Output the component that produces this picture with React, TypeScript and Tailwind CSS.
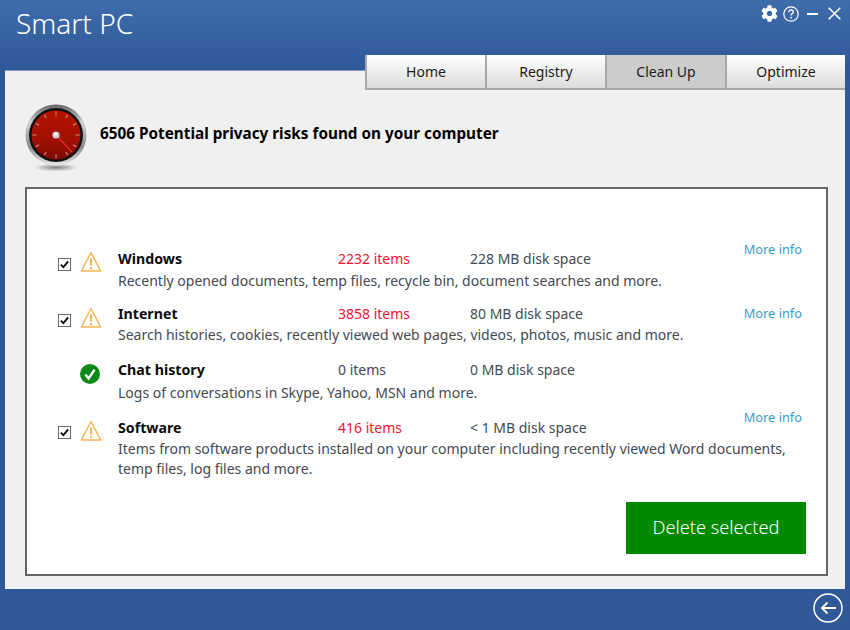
import React from "react";
import { FaCog } from "react-icons/fa";

const font = { fontFamily: '"Noto Sans", sans-serif' };

function Warn() {
  return (
    <svg width="22" height="22" viewBox="0 0 22 22" fill="none" className="block">
      <path d="M11 1.500 L20.700 20 H1.300 Z" stroke="#f9b457" strokeWidth="1.500" strokeLinejoin="round" fill="#fffdf8" />
      <path d="M11 7.500 V14.500" stroke="#f9b457" strokeWidth="2" />
      <path d="M11 16.200 V18.200" stroke="#f9b457" strokeWidth="2" />
    </svg>
  );
}

function Ok() {
  return (
    <svg width="20" height="20" viewBox="0 0 20 20" className="block">
      <circle cx="10" cy="10" r="10" fill="#0b8a17" />
      <path d="M5.300 10.500 L8.600 14.500 L14.600 5.600" stroke="#fff" strokeWidth="2.300" fill="none" />
    </svg>
  );
}

function Check() {
  return (
    <div className="w-[13px] h-[13px] border border-[#6a6a6a] bg-white flex items-center justify-center">
      <svg width="9" height="9" viewBox="0 0 9 9">
        <path d="M0.800 4.600 L3.400 7.200 L8.200 1.400" stroke="#111" strokeWidth="1.900" fill="none" />
      </svg>
    </div>
  );
}

function Gauge() {
  const ticks = Array.from({ length: 12 }, (_, i) => i * 30);
  return (
    <svg width="62" height="68" viewBox="0 0 62 68" className="block">
      <defs>
        <linearGradient id="rim" x1="0" y1="0" x2="0" y2="1">
          <stop offset="0" stopColor="#666666" />
          <stop offset="0.3" stopColor="#d0d0d0" />
          <stop offset="0.7" stopColor="#8a8a8a" />
          <stop offset="1" stopColor="#ececec" />
        </linearGradient>
        <linearGradient id="face" x1="0" y1="0" x2="0" y2="1">
          <stop offset="0" stopColor="#b51400" />
          <stop offset="0.6" stopColor="#a01000" />
          <stop offset="1" stopColor="#7c0a02" />
        </linearGradient>
        <radialGradient id="shadow">
          <stop offset="0" stopColor="#808080" />
          <stop offset="1" stopColor="#808080" stopOpacity="0" />
        </radialGradient>
      </defs>
      <ellipse cx="31" cy="63.500" rx="22" ry="4" fill="url(#shadow)" />
      <circle cx="31" cy="31" r="30.500" fill="url(#rim)" />
      <circle cx="31" cy="31" r="27" fill="#111" />
      <circle cx="31" cy="31" r="24.500" fill="url(#face)" />
      {ticks.map((a) => (
        <line key={a} x1="31" y1="7.500" x2="31" y2="11.500" stroke="#d98f84" strokeWidth="1" transform={`rotate(${a} 31 31)`} />
      ))}
      <line x1="31" y1="31" x2="47" y2="48" stroke="#f02a35" strokeWidth="1.100" />
      <circle cx="31" cy="31" r="3.600" fill="#d0d0d0" />
      <circle cx="30.500" cy="30" r="1.600" fill="#fff" />
    </svg>
  );
}

function Row({
  title,
  items,
  disk,
  desc,
  warn,
  more,
  className,
  descClass,
  iconClass,
  checkClass,
}: {
  title: string;
  items: string;
  disk: string;
  desc: React.ReactNode;
  warn: boolean;
  more?: string;
  className?: string;
  descClass: string;
  iconClass: string;
  checkClass: string;
}) {
  return (
    <div className={`relative flex ${className ?? ""}`}>
      <div className={`w-[22px] shrink-0 ${checkClass}`}>{warn && <Check />}</div>
      <div className={`w-[38px] shrink-0 ${iconClass}`}>{warn ? <Warn /> : <Ok />}</div>
      <div className="flex-1 min-w-0">
        <div className="flex h-[22px] items-center text-[14px] leading-[22px]">
          <div className="w-[220px] font-bold text-[#0b0b0b] text-[14.200px]">{title}</div>
          <div className={`w-[132px] ${warn ? "text-[#f0142c]" : "text-[#444a52]"}`}>{items}</div>
          <div className="text-[#444a52]">{disk}</div>
        </div>
        <div className={`text-[14px] leading-[20px] text-[#444a52] ${descClass}`}>{desc}</div>
      </div>
      {more && (
        <div className={`absolute right-[8px] text-[12.800px] leading-[18px] text-[#3d9cc9] ${more}`}>More info</div>
      )}
    </div>
  );
}

export default function App() {
  return (
    <div className="w-[850px] h-[630px] overflow-hidden flex flex-col bg-[#2f5899]" style={font}>
      <div className="h-[70px] shrink-0 relative bg-gradient-to-b from-[#3f6cab] to-[#2f5899] flex items-start justify-between pl-[16px] pr-[9px]">
        <div className="text-[28px] font-light leading-[47px] text-white">Smart PC</div>
        <div className="flex items-center pt-[5px] text-white">
          <FaCog size={17} color="#fff" />
          <svg width="16" height="16" viewBox="0 0 16 16" fill="none" stroke="#fff" strokeWidth="1.200" className="ml-[5px]">
            <circle cx="8" cy="8" r="7.200" />
            <path d="M5.700 6.200c0-1.300 1-2.200 2.300-2.200s2.300 .9 2.300 2c0 1.600-2.300 1.700-2.300 3.500" strokeWidth="1.300" />
            <path d="M8 10.700v1.700" strokeWidth="1.400" />
          </svg>
          <div className="w-[11px] h-[2px] bg-white ml-[8px]" />
          <svg width="13" height="13" viewBox="0 0 13 13" stroke="#fff" strokeWidth="1.600" className="ml-[10px]">
            <path d="M.7 .7 12.300 12.300M12.300 .7 .7 12.300" />
          </svg>
        </div>
      </div>

      <div className="mx-[5px] h-[519px] shrink-0 bg-[#f0f0f0] border-t border-[#7f9ac2] flex flex-col">
        <div className="flex justify-end -mt-[16px] h-[35px] shrink-0 relative">
          {["Home", "Registry", "Clean Up", "Optimize"].map((t) => (
            <div
              key={t}
              className={`w-[120px] h-[35px] flex items-center justify-center text-[14px] text-[#1c1c1c] border-b-2 border-b-[#a8a8a8] border-l-2 border-l-[#a8a8a8] ${
                t === "Clean Up" ? "bg-[#cccccc]" : "bg-gradient-to-b from-[#ffffff] to-[#dcdcdc]"
              }`}
            >
              {t}
            </div>
          ))}
        </div>

        <div className="flex items-center h-[97px] shrink-0 pl-[20px] pb-[10px]">
          <div className="pt-[9px]">
            <Gauge />
          </div>
          <div className="ml-[13px] font-bold text-[15.300px] text-black">6506 Potential privacy risks found on your computer</div>
        </div>

        <div className="ml-[20px] mr-[17px] h-[389px] border-2 border-[#666666] bg-white pl-[31px] pr-[16px] pt-[59px] flex flex-col relative">
          <Row
            title="Windows"
            items="2232 items"
            disk="228 MB disk space"
            desc="Recently opened documents, temp files, recycle bin, document searches and more."
            warn
            more="top-[-8px]"
            descClass="mt-[1px]"
            iconClass="pt-[3px]"
            checkClass="pt-[10px]"
          />
          <Row
            className="mt-[12px]"
            title="Internet"
            items="3858 items"
            disk="80 MB disk space"
            desc="Search histories, cookies, recently viewed web pages, videos, photos, music and more."
            warn
            more="top-[1px]"
            descClass="mt-0"
            iconClass="pt-[4px]"
            checkClass="pt-[11px]"
          />
          <Row
            className="mt-[14px]"
            title="Chat history"
            items="0 items"
            disk="0 MB disk space"
            desc="Logs of conversations in Skype, Yahoo, MSN and more."
            warn={false}
            descClass="mt-[2px]"
            iconClass="pt-[5px]"
            checkClass=""
          />
          <Row
            className="mt-[14px]"
            title="Software"
            items="416 items"
            disk="< 1 MB disk space"
            desc={
              <>
                Items from software products installed on your computer including recently viewed Word documents,
                <br />
                temp files, log files and more.
              </>
            }
            warn
            more="top-[-9px]"
            descClass="mt-0"
            iconClass="pt-[3px]"
            checkClass="pt-[9px]"
          />
          <div className="absolute left-[325px] top-[128px] text-[18px] leading-[18px] font-bold tracking-[2px] text-white opacity-50">
            SOFTPEDIA
          </div>
          <div className="flex justify-end mt-auto mb-[20px]">
            <div className="w-[180px] h-[52px] pb-[1px] mr-[4px] bg-[#008a00] text-white text-[18.200px] font-light flex items-center justify-center">
              Delete selected
            </div>
          </div>
        </div>
      </div>

      <div className="flex-1 flex justify-end items-start pr-[7px] pt-[4px]">
        <svg width="30" height="30" viewBox="0 0 30 30" fill="none" stroke="#fff">
          <circle cx="15" cy="15" r="14" strokeWidth="1.500" />
          <path d="M23 15H9M14.500 9.500 9 15l5.500 5.500" strokeWidth="2" />
        </svg>
      </div>
    </div>
  );
}
